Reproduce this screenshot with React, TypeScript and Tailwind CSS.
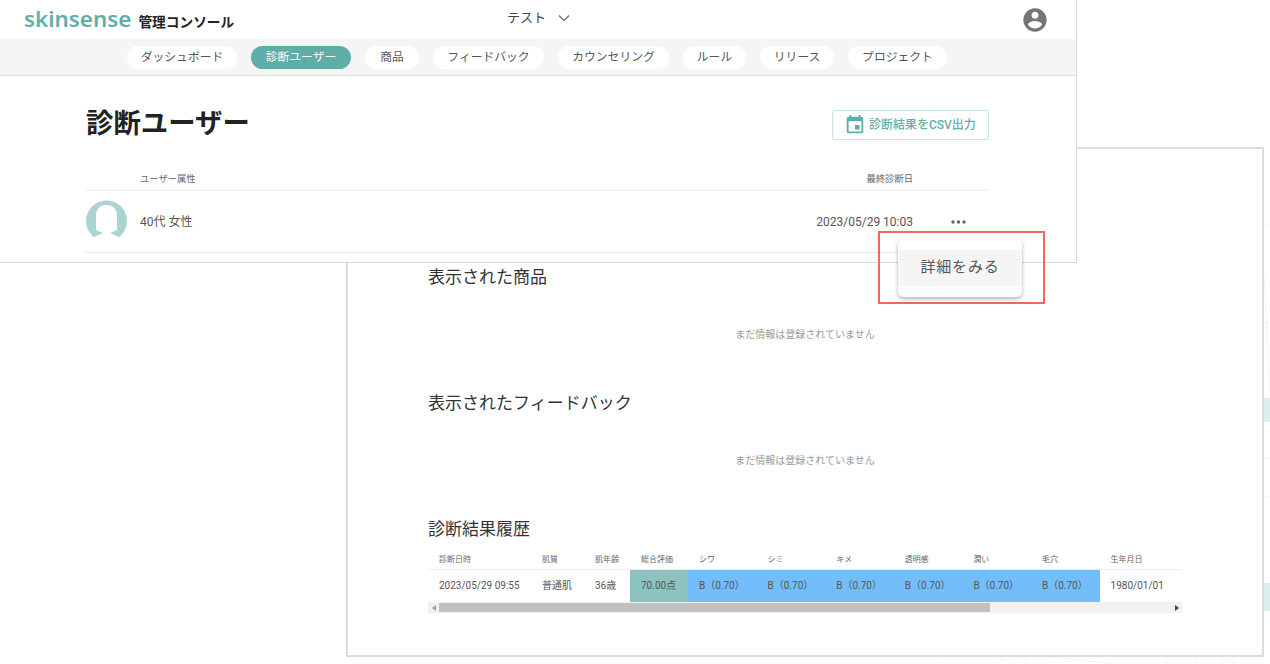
const jp = "font-['Roboto','Noto_Sans_CJK_JP',sans-serif]";

const navItems = [
  { label: 'ダッシュボード', width: 'w-[110px]' },
  { label: '診断ユーザー', width: 'w-[100px]' },
  { label: '商品', width: 'w-[54px]' },
  { label: 'フィードバック', width: 'w-[111px]' },
  { label: 'カウンセリング', width: 'w-[111px]' },
  { label: 'ルール', width: 'w-[63px]' },
  { label: 'リリース', width: 'w-[74px]' },
  { label: 'プロジェクト', width: 'w-[99px]' },
];
const columns = ['診断日時', '肌質', '肌年齢', '総合評価', 'シワ', 'シミ', 'キメ', '透明感', '潤い', '毛穴', '生年月日'];
const scores = ['シワ', 'シミ', 'キメ', '透明感', '潤い', '毛穴'];
const tableGrid = 'grid grid-cols-[103px_53px_46px_58px_repeat(6,68.6px)_83px]';

function BackgroundArt() {
  return (
    <svg className="absolute left-0 top-0" width="1270" height="664" viewBox="0 0 1270 664" fill="none">
      <path d="M1263 205c3 5 5 6 7 7M1263 223c3 1 5 1 7 3M1263 265c3 30 5 90 7 130M1263 322h7M1263 458h7M1263 497h7" stroke="#f0f5f5" />
      <rect x="1263" y="398" width="7" height="24" fill="#dcefee" />
      <rect x="1263" y="583" width="7" height="28" fill="#dcefee" />
      <path d="M938 664l6-8M998 664l5-8M1026 664l-4-8M1040 656c25 2 50 5 73 8M1167 664l-2-8M1194 664l3-8M1222 664l4-8M1234 664v-8" stroke="#f0f5f5" />
    </svg>
  );
}

function DiagnosisHistory() {
  return (
    <div className="w-[754px] overflow-hidden">
      <div className={`${tableGrid} h-[20px] items-center border-b border-[#eeeeee] pt-[1px] text-[8px] text-[#666666]`}>
        {columns.map((c) => (
          <div key={c} className="pl-[11px]">{c}</div>
        ))}
      </div>
      <div className={`${tableGrid} h-[32px] text-[10px] text-[#555555]`}>
        <div className="pl-[11px] leading-[32px]">2023/05/29 09:55</div>
        <div className="pl-[11px] leading-[32px]">普通肌</div>
        <div className="pl-[11px] leading-[32px]">36歳</div>
        <div className="bg-[#8cc3bf] pl-[11px] leading-[32px]">70.00点</div>
        {scores.map((s) => (
          <div key={s} className="bg-[#73bdfb] pl-[11px] leading-[32px]">B（0.70）</div>
        ))}
        <div className="pl-[11px] leading-[32px]">1980/01/01</div>
      </div>
      <div className="flex h-[11px] items-center bg-[#f1f1f1]">
        <div className="flex w-[11px] justify-center">
          <svg width="4" height="6" viewBox="0 0 4 6" fill="#a0a0a0"><path d="M4 0v6L0 3z" /></svg>
        </div>
        <div className="h-[9px] w-[551px] bg-[#c1c1c1]" />
        <div className="ml-auto flex w-[11px] justify-center">
          <svg width="4" height="6" viewBox="0 0 4 6" fill="#444444"><path d="M0 0v6l4-3z" /></svg>
        </div>
      </div>
    </div>
  );
}

function ResultWindow() {
  return (
    <div className="absolute left-[346px] top-[147px] h-[510px] w-[918px] border-2 border-[#dddddd] bg-white pl-[80px] pt-[116px]">
      <h2 className="text-[17px] leading-[24px] text-[#333333]">表示された商品</h2>
      <p className="mt-[39px] w-[754px] text-center text-[10px] leading-[14px] text-[#999999]">まだ情報は登録されていません</p>
      <h2 className="mt-[49px] text-[17px] leading-[24px] text-[#333333]">表示されたフィードバック</h2>
      <p className="mt-[39px] w-[754px] text-center text-[10px] leading-[14px] text-[#999999]">まだ情報は登録されていません</p>
      <h2 className="mb-[9px] mt-[49px] text-[17px] leading-[24px] text-[#333333]">診断結果履歴</h2>
      <DiagnosisHistory />
    </div>
  );
}

function UserWindow() {
  return (
    <div className="absolute left-0 top-0 h-[263px] w-[1077px] border-b border-r border-[#d9d9d9] bg-white">
      <header className="relative flex h-[39px] items-center px-[24px]">
        <span className="font-['Noto_Sans',sans-serif] text-[22.4px] font-semibold leading-none text-[#5fb0a9]">skinsense</span>
        <span className="ml-[7px] mt-[5px] text-[13.7px] font-bold text-[#222222]">管理コンソール</span>
        <div className="absolute left-[507px] top-[8px] flex items-center gap-[11px] text-[13px] text-[#444444]">
          <span>テスト</span>
          <svg width="14" height="14" viewBox="0 0 14 14" fill="none" stroke="#777777" strokeWidth="1.5"><path d="M2 4.500l5 5 5-5" /></svg>
        </div>
        <svg className="ml-auto mr-[3px]" width="28" height="28" viewBox="0 0 24 24" fill="#757575">
          <path d="M12 2C6.48 2 2 6.48 2 12s4.48 10 10 10 10-4.48 10-10S17.52 2 12 2zm0 3c1.66 0 3 1.34 3 3s-1.34 3-3 3-3-1.34-3-3 1.34-3 3-3zm0 14.2c-2.5 0-4.71-1.28-6-3.22.03-1.99 4-3.08 6-3.08 1.99 0 5.97 1.09 6 3.08-1.29 1.94-3.5 3.22-6 3.22z" />
        </svg>
      </header>
      <nav className="flex h-[37px] items-start justify-center gap-[14px] border-b border-[#e2e2e2] bg-[#f5f5f5] pr-[2px] pt-[7px]">
        {navItems.map((item) => (
          <a key={item.label} className={`${item.width} h-[23px] rounded-full text-center text-[11.8px] leading-[23px] ${item.label === '診断ユーザー' ? 'bg-[#5fada7] text-white' : 'bg-white text-[#555555]'}`}>{item.label}</a>
        ))}
      </nav>
      <main className="pl-[86px] pr-[87px]">
        <div className="flex h-[94px] items-center justify-between pt-[3px]">
          <h1 className="mt-[1px] text-[27.4px] font-bold text-[#222222]">診断ユーザー</h1>
          <button className="mt-[1px] flex h-[30px] w-[157px] items-center gap-[3px] rounded-[2px] border border-[#c8e6e3] pl-[11px] text-[12px] font-medium text-[#5fb0a9]">
            <svg width="22" height="22" viewBox="0 0 24 24" fill="#5fada7">
              <path d="M17 12h-5v5h5v-5zM16 1v2H8V1H6v2H5c-1.11 0-1.99.9-1.99 2L3 19c0 1.1.89 2 2 2h14c1.1 0 2-.9 2-2V5c0-1.1-.9-2-2-2h-1V1h-2zm3 18H5V8h14v11z" />
            </svg>
            診断結果をCSV出力
          </button>
        </div>
        <div className="flex h-[21px] items-start justify-between border-b-2 border-[#f4f4f4] pl-[54px] pr-[76px] pt-[2px] text-[9.3px] leading-[14px] text-[#666666]">
          <span>ユーザー属性</span>
          <span>最終診断日</span>
        </div>
        <div className="flex h-[62px] items-center border-b border-[#e8e8e8] text-[12px] text-[#555555]">
          <svg className="mr-[13px]" width="41" height="44" viewBox="0 0 41 44">
            <circle cx="20.5" cy="21" r="20.5" fill="#a9d4d2" />
            <path d="M10 30V16C10 8 15 5 20.5 5S31 8 31 16V30L24 33L33 37L36 44H5L8 37L17 33Z" fill="white" />
          </svg>
          <span>40代 女性</span>
          <span className="ml-auto">2023/05/29 10:03</span>
          <svg className="ml-[38px] mr-[23px]" width="15" height="4" viewBox="0 0 15 4" fill="#666666">
            <circle cx="2" cy="2" r="1.700" /><circle cx="7.500" cy="2" r="1.700" /><circle cx="13" cy="2" r="1.700" />
          </svg>
        </div>
      </main>
    </div>
  );
}

export default function App() {
  return (
    <div className={`relative h-[664px] w-[1270px] overflow-hidden bg-white ${jp}`}>
      <BackgroundArt />
      <ResultWindow />
      <UserWindow />
      <div className="absolute left-[878px] top-[231px] h-[73px] w-[167px] border-2 border-[#f0695e]" />
      <div className="absolute left-[898px] top-[239px] w-[124px] rounded-[5px] bg-white py-[11px] shadow-[0_2px_4px_rgba(0,0,0,0.3)]">
        <div className="h-[36px] bg-[#f5f5f5] text-center text-[15px] leading-[34px] tracking-[0.8px] text-[#555555]">詳細をみる</div>
      </div>
    </div>
  );
}
